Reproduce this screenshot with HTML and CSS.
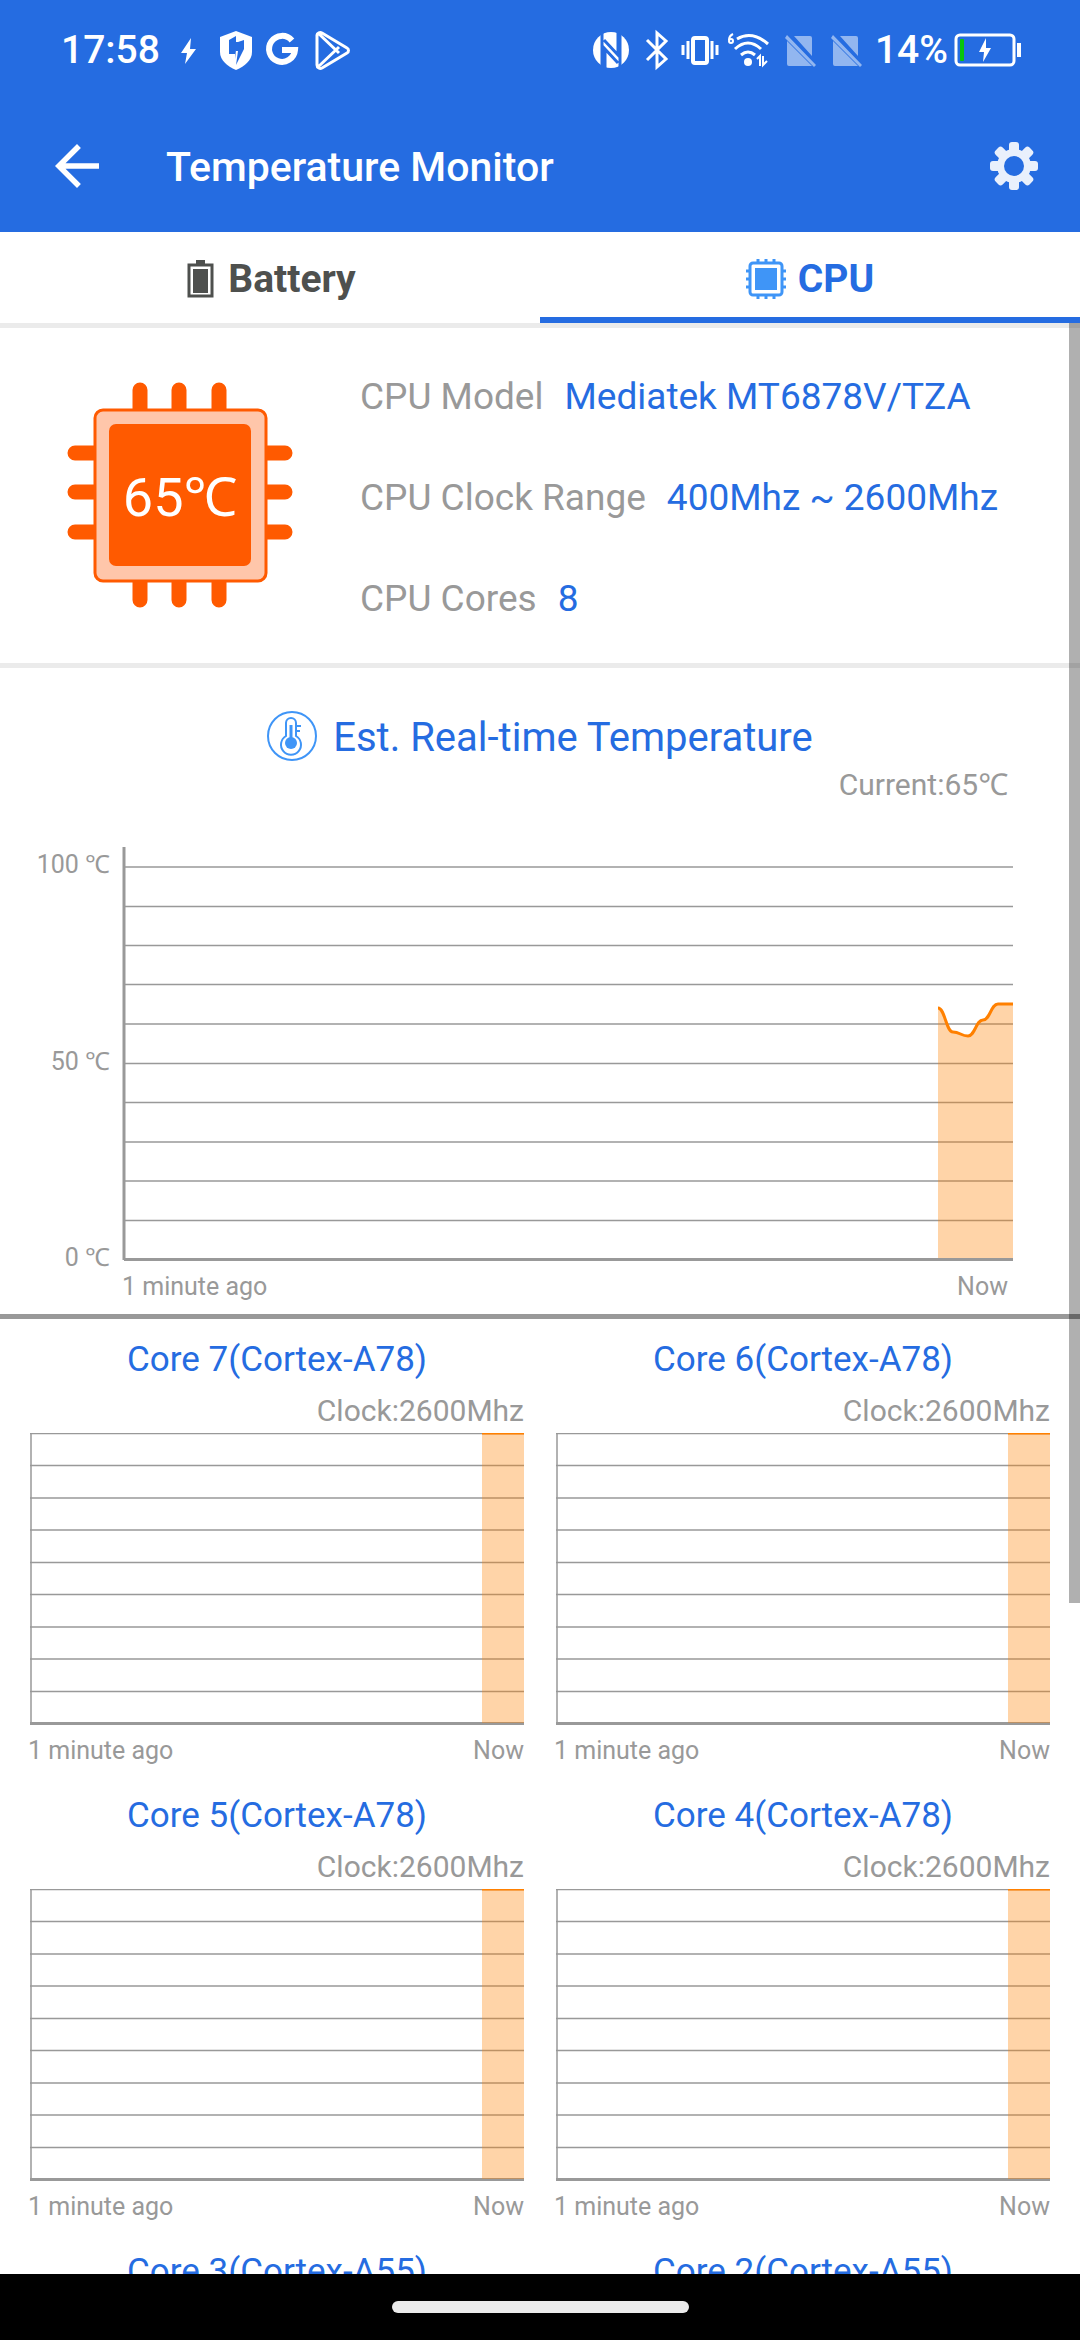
FILE: index.html
```html
<!DOCTYPE html>
<html lang="en">
<head>
  <meta charset="UTF-8">
  <meta name="viewport" content="width=device-width, initial-scale=1.0">
  <title>Temperature Monitor</title>

  <link rel="stylesheet" href="styles.css">
</head>
<body>
  <!-- Shared plot for every core chart -->
  <svg class="defs" width="0" height="0" aria-hidden="true">
    <symbol id="core-plot" viewBox="0 0 494 292" preserveAspectRatio="none">
      <path class="grid-line" d="M0 0.5H494M0 32.5H494M0 65H494M0 97H494M0 129.5H494M0 161.5H494M0 194H494M0 226H494M0 258.5H494" />
      <path class="axis-thin" d="M1 0V291" />
      <path class="axis" d="M0 290.5H494" />
      <path class="area" d="M452 0H494V290H452Z" />
      <path class="trend" d="M452 0H494" />
    </symbol>
  </svg>

  <header>
    <div class="status-bar">
      <div class="status-group">
        <span>17:58</span>
        <svg width="44" height="44" viewBox="0 0 44 44" fill="#fff"><path d="M25 10 15 25h6l-2 11 11-15h-6z" /></svg>
        <svg width="40" height="44" viewBox="0 0 40 44"><path fill="#fff" d="M20 3l16 6v15c0 8-7 14-16 18C11 38 4 32 4 24V9z" /><path fill="#256ce1" d="M20 8v14l-1 9v-5h-6V12zM22 14l6-2v9l-8 16 2-14h-2v-9z" /></svg>
        <svg width="40" height="44" viewBox="0 0 40 44" fill="none" stroke="#fff" stroke-width="6"><path d="M30 12.500A13 13 0 1 0 33 22H20" /></svg>
        <svg width="44" height="44" viewBox="0 0 44 44" fill="none" stroke="#fff" stroke-width="3" stroke-linejoin="round"><path d="M9 7v30c0 3 3 4 5 3l25-15c2-1 2-4 0-5L14 5c-2-1-5 0-5 2zM10 5l21 20M10 39l21-20" /></svg>
      </div>
      <div class="status-group">
        <svg width="40" height="44" viewBox="0 0 40 44"><circle cx="20" cy="22" r="18" fill="#fff" /><path fill="none" stroke="#256ce1" stroke-width="3" d="M11 3v38M13 12l14 15V3M29 41V3M27 35 14 21v22" /></svg>
        <svg width="36" height="44" viewBox="0 0 36 44" fill="none" stroke="#fff" stroke-width="3"><path d="m10 12 19 19-9 8V5l9 8-19 19" /></svg>
        <svg width="42" height="44" viewBox="0 0 42 44" fill="none" stroke="#fff" stroke-width="3"><path d="M4 17v10M9 13v18M33 13v18M38 17v10" /><rect x="14" y="10" width="14" height="25" rx="2" stroke-width="4" /></svg>
        <svg width="50" height="44" viewBox="0 0 50 44" fill="none" stroke="#fff" stroke-width="3"><path d="M10 11q15-9 31 5M8 21q13-12 26 0M14 27q7-6 14 0" /><circle cx="21" cy="34" r="4" fill="#fff" stroke="none" /><path stroke-width="2" d="M6 6Q2 8 2 12" /><circle cx="4" cy="13" r="2" stroke-width="2" /><path stroke-width="2" d="m30 31 3-3v10M36 28v9l4-4" /></svg>
        <svg width="40" height="44" viewBox="0 0 40 44" opacity=".5"><path fill="#fff" d="M11 8h16q2 0 2 2v18zM4 13l25 25H6q-2 0-2-2zM4 7l-2 3 29 29 2-2z" /></svg>
        <svg width="40" height="44" viewBox="0 0 40 44" opacity=".5"><path fill="#fff" d="M11 8h16q2 0 2 2v18zM4 13l25 25H6q-2 0-2-2zM4 7l-2 3 29 29 2-2z" /></svg>
        <span>14%</span>
        <svg width="68" height="44" viewBox="2 0 68 44"><rect x="4" y="7" width="58" height="30" rx="4" fill="none" stroke="#fff" stroke-width="3" /><path fill="#fff" d="M65 15h4v14h-4z" /><rect x="8" y="11" width="4" height="22" rx="1" fill="#08c40c" /><path fill="#fff" d="M34 10 27 24h5l-1 10 8-14h-5z" /></svg>
      </div>
    </div>

    <div class="app-bar">
      <button type="button" class="icon-button" aria-label="Back">
        <svg width="66" height="66" viewBox="0 0 24 24" fill="#fff"><path d="M20 11H7.830l5.590-5.590L12 4l-8 8 8 8 1.410-1.410L7.830 13H20z" /></svg>
      </button>
      <h1>Temperature Monitor</h1>
      <button type="button" class="icon-button" aria-label="Settings">
        <svg width="48" height="48" viewBox="-24 -24 48 48" fill="#e9f0fc">
          <rect x="-5" y="-24" width="10" height="48" rx="3" />
          <rect x="-5" y="-24" width="10" height="48" rx="3" transform="rotate(45)" />
          <rect x="-5" y="-24" width="10" height="48" rx="3" transform="rotate(90)" />
          <rect x="-5" y="-24" width="10" height="48" rx="3" transform="rotate(135)" />
          <circle r="17" />
          <circle r="10" fill="#256ce1" />
        </svg>
      </button>
    </div>
  </header>

  <nav class="tabs">
    <a href="#battery" class="tab">
      <svg width="32" height="40" viewBox="0 0 32 40"><path fill="#4e504e" d="M12 1h9v4h-9z" /><rect x="5" y="6" width="23" height="31" fill="none" stroke="#4e504e" stroke-width="3" /><path fill="#4e504e" d="M9 10h15v24H9z" /></svg>
      Battery
    </a>
    <a href="#cpu" class="tab active">
      <svg width="40" height="40" viewBox="0 0 40 40"><path stroke="#3f95f7" stroke-width="3" d="M12 0v4M20 0v4M28 0v4M12 36v4M20 36v4M28 36v4M0 12h4M0 20h4M0 28h4M36 12h4M36 20h4M36 28h4" /><rect x="4" y="4" width="32" height="32" rx="3" fill="#fff" stroke="#3f95f7" stroke-width="3" /><path fill="#3f95f7" d="M9 9h22v22H9z" /></svg>
      CPU
    </a>
  </nav>

  <main>
    <section class="info">
      <div class="chip">
        <svg viewBox="0 0 226 226">
          <path stroke="#ff5a00" stroke-width="15" stroke-linecap="round" d="M73 8V218M112 8V218M152 8V218M8 71H218M8 110H218M8 150H218" />
          <rect x="28" y="28" width="171" height="171" rx="8" fill="#ffc6aa" stroke="#ff5a00" stroke-width="3" />
          <rect x="42" y="42" width="142" height="142" rx="7" fill="#ff5a00" />
        </svg>
        <span>65℃</span>
      </div>
      <dl class="specs">
        <div>
          <dt>CPU Model</dt>
          <dd>Mediatek MT6878V/TZA</dd>
        </div>
        <div>
          <dt>CPU Clock Range</dt>
          <dd>400Mhz ~ 2600Mhz</dd>
        </div>
        <div>
          <dt>CPU Cores</dt>
          <dd>8</dd>
        </div>
      </dl>
    </section>

    <section class="temperature">
      <h2>
        <svg width="50" height="50" viewBox="0 0 50 50" fill="none" stroke="#3f95f7" stroke-width="2"><circle cx="25" cy="25" r="24" /><path d="M19 25V12a5 5 0 0 1 10 0v13a10 10 0 1 1-10 0zM30 15h4M30 20h3" /><path stroke-width="3" d="M24 14v16" /><circle cx="24" cy="32" r="6" fill="#3f95f7" stroke="none" /></svg>
        Est. Real-time Temperature
      </h2>
      <p class="reading">Current:65℃</p>
      <div class="chart">
        <div class="y-axis">
          <span>100 ℃</span>
          <span>50 ℃</span>
          <span>0 ℃</span>
        </div>
        <svg class="plot" viewBox="0 0 891 414" preserveAspectRatio="none">
          <path class="grid-line" d="M2 20H891M2 59.500H891M2 98.500H891M2 137.500H891M2 177H891M2 216.500H891M2 255.500H891M2 295H891M2 334H891M2 373.500H891" />
          <path class="area" d="M816 161C823 161 824 185 831 185C838 185 839 189 846 189C853 189 854 173 861 173C868 173 869 157 876 157H891V412H816Z" />
          <path class="axis" d="M2 0V413M2 412.500H891" />
          <path class="trend" d="M816 161C823 161 824 185 831 185C838 185 839 189 846 189C853 189 854 173 861 173C868 173 869 157 876 157H891" />
        </svg>
        <div class="x-axis"><span>1 minute ago</span><span>Now</span></div>
      </div>
    </section>

    <section class="cores">
      <article>
        <h3>Core 7(Cortex-A78)</h3>
        <p class="clock">Clock:2600Mhz</p>
        <svg class="core-plot"><use href="#core-plot" /></svg>
        <div class="x-axis"><span>1 minute ago</span><span>Now</span></div>
      </article>
      <article>
        <h3>Core 6(Cortex-A78)</h3>
        <p class="clock">Clock:2600Mhz</p>
        <svg class="core-plot"><use href="#core-plot" /></svg>
        <div class="x-axis"><span>1 minute ago</span><span>Now</span></div>
      </article>
      <article>
        <h3>Core 5(Cortex-A78)</h3>
        <p class="clock">Clock:2600Mhz</p>
        <svg class="core-plot"><use href="#core-plot" /></svg>
        <div class="x-axis"><span>1 minute ago</span><span>Now</span></div>
      </article>
      <article>
        <h3>Core 4(Cortex-A78)</h3>
        <p class="clock">Clock:2600Mhz</p>
        <svg class="core-plot"><use href="#core-plot" /></svg>
        <div class="x-axis"><span>1 minute ago</span><span>Now</span></div>
      </article>
      <article>
        <h3>Core 3(Cortex-A55)</h3>
      </article>
      <article>
        <h3>Core 2(Cortex-A55)</h3>
      </article>
    </section>

    <div class="scroll-thumb"></div>
  </main>

  <footer class="nav-bar">
    <div class="pill"></div>
  </footer>
</body>
</html>
```
FILE: styles.css
```css
* {
  box-sizing: border-box;
  margin: 0;
  padding: 0;
}

body {
  display: flex;
  flex-direction: column;
  height: 100vh;
  overflow: hidden;
  font-family: Roboto, "Noto Sans", sans-serif;
  color: #999;
  background: #fff;
}

svg {
  display: block;
  flex: none;
}

.defs {
  position: absolute;
}

header {
  flex: none;
  color: #fff;
  background: #256ce1;
}

/* Status bar */
.status-bar {
  display: flex;
  justify-content: space-between;
  height: 100px;
  padding: 0 58px 0 61px;
  font-size: 39px;
  font-weight: 500;
}

.status-group {
  display: flex;
  align-items: center;
  gap: 6px;
}

/* App bar */
.app-bar {
  display: flex;
  align-items: center;
  height: 132px;
  padding: 0 42px 0 44px;
}

.app-bar h1 {
  flex: 1;
  margin-left: 56px;
  padding-top: 2px;
  font-size: 41px;
  font-weight: 500;
}

.icon-button {
  border: none;
  background: none;
  cursor: pointer;
}

/* Tabs */
.tabs {
  display: flex;
  flex: none;
}

.tab {
  display: flex;
  flex: 1;
  align-items: center;
  justify-content: center;
  gap: 12px;
  height: 91px;
  padding-top: 8px;
  border-bottom: 6px solid transparent;
  color: #4e504e;
  font-size: 39px;
  font-weight: 700;
  text-decoration: none;
}

.tab.active {
  color: #256ce1;
  border-bottom-color: #256ce1;
}

main {
  position: relative;
  flex: 1;
  min-height: 0;
  overflow: hidden;
}

/* CPU info */
.info {
  display: flex;
  align-items: center;
  gap: 67px;
  padding: 54px 67px 55px;
  border-top: 5px solid #ebebeb;
  border-bottom: 5px solid #ebebeb;
}

.chip {
  display: grid;
  flex: none;
  width: 226px;
  height: 226px;
  place-items: center;
}

.chip > * {
  grid-area: 1 / 1;
}

.chip span {
  color: #fff;
  font-size: 54px;
}

.specs {
  display: flex;
  flex-direction: column;
  gap: 53px;
  margin: -20px 0;
  padding-top: 6px;
  font-size: 37px;
  line-height: 48px;
  white-space: nowrap;
}

.specs div {
  display: flex;
  gap: 21px;
}

.specs dd {
  color: #256ce1;
}

/* Temperature chart */
.temperature {
  padding: 43px 67px 11px 0;
  border-bottom: 5px solid #999;
}

.temperature h2 {
  display: flex;
  justify-content: center;
  gap: 16px;
  margin-right: -67px;
  color: #256ce1;
  font-size: 40px;
  font-weight: 400;
  line-height: 54px;
}

.reading {
  margin: 2px 5px 44px;
  font-size: 30px;
  line-height: 36px;
  text-align: right;
}

.chart {
  display: grid;
  grid-template-columns: 110px 1fr;
  column-gap: 12px;
}

.y-axis {
  display: flex;
  flex-direction: column;
  justify-content: space-between;
  margin: 2px 0 -13px;
  font-size: 25px;
  line-height: 32px;
  text-align: right;
}

.plot {
  width: 100%;
  height: 414px;
}

.x-axis {
  display: flex;
  justify-content: space-between;
  margin: 10px 0 0 -2px;
  font-size: 25px;
  line-height: 32px;
}

.chart .x-axis {
  grid-column: 2;
  margin-left: 0;
  padding-right: 5px;
}

.grid-line,
.axis-thin {
  fill: none;
  stroke: #999;
  stroke-width: 1.5;
}

.axis {
  fill: none;
  stroke: #999;
  stroke-width: 3;
}

.area {
  fill: #ff8000;
  fill-opacity: .34;
}

.trend {
  fill: none;
  stroke: #ff8000;
  stroke-width: 3;
}

/* Core charts */
.cores {
  display: grid;
  grid-template-columns: 1fr 1fr;
  gap: 27px 32px;
  padding: 19px 30px;
}

.cores h3 {
  color: #256ce1;
  font-size: 35px;
  font-weight: 400;
  line-height: 44px;
  text-align: center;
}

.clock {
  margin: 11px 0 4px;
  font-size: 30px;
  line-height: 36px;
  text-align: right;
}

.core-plot {
  width: 100%;
  height: 292px;
}

.scroll-thumb {
  position: absolute;
  top: 0;
  right: 0;
  width: 11px;
  height: 65.6%;
  background: rgba(0, 0, 0, .31);
}

/* Gesture bar */
.nav-bar {
  display: flex;
  flex: none;
  align-items: center;
  justify-content: center;
  height: 66px;
  background: #000;
}

.pill {
  width: 297px;
  height: 12px;
  border-radius: 6px;
  background: #ebebeb;
}
```
